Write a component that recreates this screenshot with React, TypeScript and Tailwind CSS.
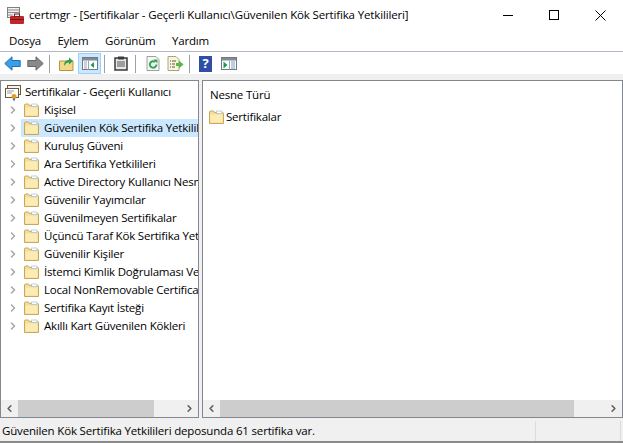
import { ChevronRight, ChevronLeft } from 'lucide-react'

const font = { fontFamily: '"Open Sans", "Noto Sans", sans-serif' }

const rows = [
  'Kişisel',
  'Güvenilen Kök Sertifika Yetkilileri',
  'Kuruluş Güveni',
  'Ara Sertifika Yetkilileri',
  'Active Directory Kullanıcı Nesnesi',
  'Güvenilir Yayımcılar',
  'Güvenilmeyen Sertifikalar',
  'Üçüncü Taraf Kök Sertifika Yetkilileri',
  'Güvenilir Kişiler',
  'İstemci Kimlik Doğrulaması Veren',
  'Local NonRemovable Certificates',
  'Sertifika Kayıt İsteği',
  'Akıllı Kart Güvenilen Kökleri',
]

function Folder() {
  return (
    <svg width="15" height="14" viewBox="0 0 15 14" className="shrink-0">
      <path d="M0.500 13.500V2a1 1 0 0 1 1-1h3l1 1.500h8a1 1 0 0 1 1 1v10z" fill="#f6dc96" stroke="#c8a85e" />
      <path d="M1.500 4.500h12v8h-12z" fill="#fcecb4" />
      <path d="M7.500 1h5.500v2.500h-5.500z" fill="#ffffff" stroke="#8fb4cf" strokeWidth="0.600" />
    </svg>
  )
}

function Sep({ className }: { className: string }) {
  return <div className={`h-[18px] w-px shrink-0 bg-[#a0a0a0] ${className}`} />
}

function Arrow({ color, edge }: { color: string; edge: string }) {
  return (
    <svg width="17" height="15" viewBox="0 0 17 15" className="shrink-0">
      <path d="M0.800 7.500 8 0.800v3.700h8.200v6H8v3.700z" fill={color} stroke={edge} />
    </svg>
  )
}

function WindowIcon({ left }: { left: boolean }) {
  return (
    <svg width="16" height="13" viewBox="0 0 16 13" className="shrink-0">
      <rect x="0.500" y="0.500" width="15" height="12" fill="#ffffff" stroke="#6f7a84" />
      <rect x="1" y="1" width="14" height="2.500" fill="#7f8b97" />
      {left ? (
        <>
          <path d="M2 5h3M2 7h3M2 9h3M2 11h3" stroke="#9aa6b2" />
          <path d="M6.500 3.500v9" stroke="#9aa6b2" />
          <path d="M12 5v6L8.500 8z" fill="#1e9a4a" />
        </>
      ) : (
        <>
          <path d="M2.500 4.500v7L6.500 8z" fill="#1e9a4a" />
          <path d="M8.500 3.500v9" stroke="#9aa6b2" />
          <path d="M10 5h4M10 7h4M10 9h4M10 11h4" stroke="#7f9fc0" />
        </>
      )}
    </svg>
  )
}

function ScrollBar({ thumb }: { thumb: string }) {
  return (
    <div className="flex h-[17px] shrink-0 items-center bg-[#f0f0f0]">
      <div className="flex w-[17px] shrink-0 justify-center">
        <ChevronLeft size={11} strokeWidth={3.500} color="#606060" />
      </div>
      <div className="h-full flex-1">
        <div className={`h-full bg-[#cdcdcd] ${thumb}`} />
      </div>
      <div className="flex w-[17px] shrink-0 justify-center">
        <ChevronRight size={11} strokeWidth={3.500} color="#606060" />
      </div>
    </div>
  )
}

export default function App() {
  return (
    <div style={font} className="flex h-[443px] w-[623px] flex-col overflow-hidden bg-[#f0f0f0] text-[11.5px] tracking-[-0.2px] text-black">
      <div className="flex h-[30px] shrink-0 items-center bg-white pl-[7px]">
        <svg width="17" height="17" viewBox="0 0 17 17" className="mr-[5px] shrink-0">
          <rect x="0.500" y="0.500" width="12" height="10" fill="#f2f2f2" stroke="#808080" />
          <path d="M1 3h11M1 5.500h11M1 8h5" stroke="#8a8a8a" />
          <rect x="3" y="9" width="14" height="8" rx="1" fill="#c0272d" />
          <rect x="7.500" y="7" width="5" height="2.500" fill="none" stroke="#7a2020" />
          <path d="M3 12.500h14" stroke="#7a1515" />
        </svg>
        <span className="whitespace-nowrap tracking-[-0.15px]">certmgr - [Sertifikalar - Geçerli Kullanıcı\Güvenilen Kök Sertifika Yetkilileri]</span>
        <div className="ml-auto flex h-full">
          <div className="flex w-[46px] items-center justify-center">
            <div className="h-px w-[10px] bg-black" />
          </div>
          <div className="flex w-[46px] items-center justify-center">
            <div className="h-[10px] w-[10px] border border-black" />
          </div>
          <div className="flex w-[46px] items-center justify-center">
            <svg width="11" height="11" viewBox="0 0 11 11">
              <path d="M0.500 0.500l10 10M10.500 0.500l-10 10" stroke="#000" fill="none" />
            </svg>
          </div>
        </div>
      </div>

      <div className="flex h-[22px] shrink-0 items-center gap-[16.500px] border-b border-[#b4b8c4] bg-white pl-[9px]">
        <span>Dosya</span>
        <span>Eylem</span>
        <span>Görünüm</span>
        <span>Yardım</span>
      </div>

      <div className="flex h-[22px] shrink-0 items-center bg-white pl-[4px] pt-[1px]">
        <Arrow color="#3d9ee6" edge="#1c6fb5" />
        <div className="ml-[6px] -scale-x-100">
          <Arrow color="#8a8a8a" edge="#666666" />
        </div>
        <Sep className="ml-[5px]" />
        <svg width="15" height="15" viewBox="0 0 15 15" className="ml-[9px] shrink-0">
          <path d="M0.500 14.500V5h13.500v9.500z" fill="#f3d88a" stroke="#b8953f" />
          <path d="M5 10c0-4 2-6 5-6V1.500L14 5l-4 3.500V6.500c-2 0-3.500 1-5 3.500z" fill="#2e9e50" />
        </svg>
        <div className="ml-[4px] flex h-[21px] w-[23px] shrink-0 items-center justify-center border border-[#99d1ff] bg-[#cce8ff]">
          <WindowIcon left />
        </div>
        <Sep className="ml-[3px]" />
        <svg width="14" height="15" viewBox="0 0 14 15" className="ml-[9px] shrink-0">
          <rect x="1" y="2" width="12" height="12" fill="#e8e8e8" stroke="#3a3a3a" strokeWidth="1.500" />
          <rect x="4" y="0.500" width="6" height="3" fill="#3a3a3a" />
          <path d="M3 6h8M3 8h8M3 10h8" stroke="#555555" />
        </svg>
        <Sep className="ml-[7px]" />
        <svg width="14" height="15" viewBox="0 0 14 15" className="ml-[10px] shrink-0">
          <path d="M1 0.500h9l3 3v11H1z" fill="#f6f6f6" stroke="#a0a0a0" />
          <path d="M10.500 8.500a3.300 3.300 0 1 1-1.200-2.600" fill="none" stroke="#2ea84f" strokeWidth="2" />
          <path d="M7.500 3.500h4V7.500z" fill="#2ea84f" />
        </svg>
        <svg width="17" height="15" viewBox="0 0 17 15" className="ml-[7px] shrink-0">
          <path d="M1 0.500h8l3 3v11H1z" fill="#fbf5d8" stroke="#a8a28a" />
          <path d="M3 5h1M5 5h4M3 8h1M5 8h3M3 11h1M5 11h3" stroke="#555555" />
          <path d="M9 7h3V4.500L16.500 8.500 12 12.500V10H9z" fill="#58b848" />
        </svg>
        <Sep className="ml-[5px]" />
        <div className="ml-[9px] flex h-[16px] w-[13px] shrink-0 items-center justify-center bg-[#2f4ea8] text-[13px] leading-none font-bold text-white">?</div>
        <div className="ml-[9px]">
          <WindowIcon left={false} />
        </div>
      </div>

      <div className="flex min-h-0 flex-1 gap-[3px] pt-[6px]">
        <div className="flex w-[199px] shrink-0 flex-col border border-[#828790] bg-white">
          <div className="min-h-0 flex-1 overflow-hidden pt-[1px]">
            <div className="mt-px flex h-[18px] items-center whitespace-nowrap pl-[3px]">
              <svg width="18" height="17" viewBox="0 0 18 17" className="mr-[3px] shrink-0">
                <rect x="3.500" y="1.500" width="13" height="9" fill="#f4f4f4" stroke="#6b5a3a" />
                <rect x="1.500" y="4.500" width="13" height="9" fill="#ffffff" stroke="#6b5a3a" />
                <path d="M3 7h7M3 9h5" stroke="#9a9a9a" />
                <circle cx="10" cy="12.500" r="2.500" fill="#e0a020" />
                <path d="M9 14.500v2.500l1-1 1 1v-2.500" fill="#3a70c0" />
              </svg>
              <span>Sertifikalar - Geçerli Kullanıcı</span>
            </div>
            {rows.map((r, i) => (
              <div
                key={r}
                className={`ml-[20px] flex h-[18px] items-center whitespace-nowrap pl-[3px] ${i === 1 ? 'bg-[#cce8ff]' : ''}`}
              >
                <div className="-ml-[18px] mr-[2px] w-[16px] shrink-0">
                  <ChevronRight size={12} strokeWidth={3} color="#a6a6a6" className="ml-[1px]" />
                </div>
                <Folder />
                <span className="ml-[5px]">{r}</span>
              </div>
            ))}
          </div>
          <ScrollBar thumb="w-[136px]" />
        </div>

        <div className="flex min-w-0 flex-1 flex-col border border-[#828790] bg-white">
          <div className="min-h-0 flex-1">
            <div className="flex h-[27px] items-center pl-[7px] pt-[1px]">Nesne Türü</div>
            <div className="flex h-[18px] items-center pl-[6px]">
              <Folder />
              <span className="ml-[2px]">Sertifikalar</span>
            </div>
          </div>
          <ScrollBar thumb="w-[354px]" />
        </div>
      </div>

      <div className="mt-[2px] flex h-[23px] shrink-0 items-center border-b-2 border-[#8a8a8a] pl-[2px]">
        <span className="whitespace-nowrap tracking-[-0.17px]">Güvenilen Kök Sertifika Yetkilileri deposunda 61 sertifika var.</span>
        <div className="ml-auto h-[20px] w-px bg-[#dcdcdc]" />
        <div className="ml-[84px] mr-[2px] h-[20px] w-px bg-[#dcdcdc]" />
      </div>
    </div>
  )
}
